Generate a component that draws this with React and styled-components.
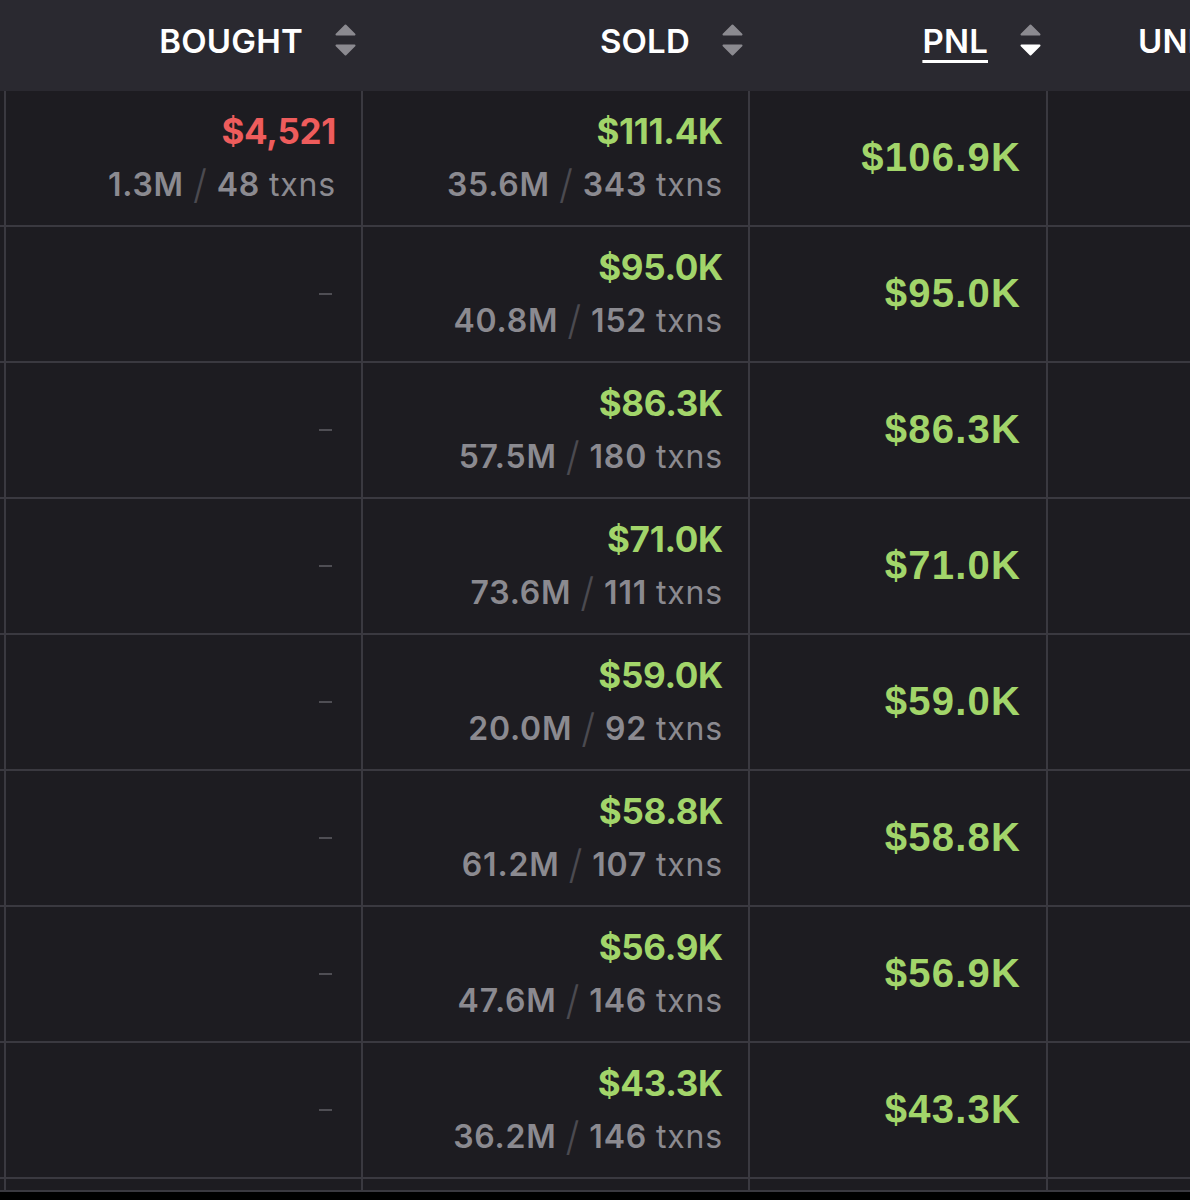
import React from 'react';
import styled, { createGlobalStyle } from 'styled-components';

const headBg = '#2a2930';
const rowBg = '#1d1c21';
const lineColor = '#3a3940';
const muted = '#8b8a90';
const green = '#a2d56a';
const red = '#ee5c5c';

const GlobalStyle = createGlobalStyle`
  html, body {
    margin: 0;
    padding: 0;
    background: #000;
  }
  body {
    font-family: Inter, "Noto Sans", sans-serif;
    overflow: hidden;
  }
  * {
    box-sizing: border-box;
  }
`;

const Table = styled.div`
  width: 1190px;
  overflow: hidden;
`;

const Row = styled.div`
  display: grid;
  grid-template-columns: 4px 357px 387px 298px 1fr;
  height: ${props => props.h}px;
  background: ${props => props.head ? headBg : rowBg};
  border-bottom: ${props => props.head ? 'none' : `2px solid ${lineColor}`};
`;

const Cell = styled.div`
  display: flex;
  flex-direction: column;
  justify-content: center;
  align-items: flex-end;
  gap: 14px;
  padding-right: 25px;
  border-left: 2px solid ${lineColor};
  min-width: 0;
  overflow: hidden;
`;

const Edge = styled.div``;

const HeadCell = styled.div`
  display: flex;
  align-items: center;
  justify-content: ${props => props.left ? 'flex-start' : 'flex-end'};
  gap: 32px;
  padding: ${props => props.left ? '0 0 12px 90px' : '0 5px 12px 0'};
  border-left: 2px solid ${headBg};
  white-space: nowrap;
  overflow: hidden;
`;

const HeadLabel = styled.span`
  color: #fff;
  font-size: 33px;
  font-weight: 600;
  letter-spacing: 0.2px;
  padding-top: 2px;
  text-decoration: ${props => props.active ? 'underline' : 'none'};
  text-decoration-thickness: 3px;
  text-underline-offset: 7px;
`;

const Usd = styled.div`
  color: ${props => props.loss ? red : green};
  font-size: 35px;
  font-weight: 700;
  line-height: 40px;
  letter-spacing: -0.3px;
`;

const Volume = styled.div`
  display: flex;
  align-items: center;
  color: ${muted};
  font-size: 32px;
  line-height: 40px;
  font-weight: 600;
  letter-spacing: 0.8px;
  white-space: nowrap;
`;

const Slash = styled.span`
  color: #4b4a50;
  font-weight: 300;
  font-size: 40px;
  margin: 0 9px;
`;

const Txns = styled.span`
  font-weight: 400;
  margin-left: 9px;
`;

const Dash = styled.span`
  display: block;
  width: 13px;
  height: 2px;
  margin-right: 4px;
  background: #4f4e54;
`;

const Pnl = styled.div`
  color: ${green};
  font-family: "Liberation Sans", Arial, sans-serif;
  font-size: 40px;
  font-weight: 700;
  letter-spacing: 1.2px;
  margin-top: -2px;
`;

function SortIcon({ active }) {
  return (
    <svg width="21" height="32" viewBox="0 0 21 32">
      <polygon points="10.5,1.5 19.5,10.5 1.5,10.5" fill={muted} stroke={muted} strokeWidth="2" strokeLinejoin="round" />
      <polygon points="1.5,21.5 19.5,21.5 10.5,30.5" fill={active ? '#fff' : muted} stroke={active ? '#fff' : muted} strokeWidth="2" strokeLinejoin="round" />
    </svg>
  );
}

const rows = [
  { bought: { usd: '$4,521', amt: '1.3M', tx: '48' }, sold: { usd: '$111.4K', amt: '35.6M', tx: '343' }, pnl: '$106.9K' },
  { sold: { usd: '$95.0K', amt: '40.8M', tx: '152' }, pnl: '$95.0K' },
  { sold: { usd: '$86.3K', amt: '57.5M', tx: '180' }, pnl: '$86.3K' },
  { sold: { usd: '$71.0K', amt: '73.6M', tx: '111' }, pnl: '$71.0K' },
  { sold: { usd: '$59.0K', amt: '20.0M', tx: '92' }, pnl: '$59.0K' },
  { sold: { usd: '$58.8K', amt: '61.2M', tx: '107' }, pnl: '$58.8K' },
  { sold: { usd: '$56.9K', amt: '47.6M', tx: '146' }, pnl: '$56.9K' },
  { sold: { usd: '$43.3K', amt: '36.2M', tx: '146' }, pnl: '$43.3K' },
];

function Trade({ data, loss }) {
  if (!data) return <Dash />;
  return (
    <>
      <Usd loss={loss}>{data.usd}</Usd>
      <Volume>
        {data.amt}
        <Slash>/</Slash>
        {data.tx}
        <Txns>txns</Txns>
      </Volume>
    </>
  );
}

export default function App() {
  return (
    <Table>
      <GlobalStyle />
      <Row head h={91}>
        <Edge />
        <HeadCell>
          <HeadLabel>BOUGHT</HeadLabel>
          <SortIcon />
        </HeadCell>
        <HeadCell>
          <HeadLabel>SOLD</HeadLabel>
          <SortIcon />
        </HeadCell>
        <HeadCell>
          <HeadLabel active>PNL</HeadLabel>
          <SortIcon active />
        </HeadCell>
        <HeadCell left>
          <HeadLabel>UNREALIZED</HeadLabel>
        </HeadCell>
      </Row>
      {rows.map((r, i) => (
        <Row key={i} h={136}>
          <Edge />
          <Cell>
            <Trade data={r.bought} loss />
          </Cell>
          <Cell>
            <Trade data={r.sold} />
          </Cell>
          <Cell>
            <Pnl>{r.pnl}</Pnl>
          </Cell>
          <Cell />
        </Row>
      ))}
      <Row h={13}>
        <Edge />
        <Cell />
        <Cell />
        <Cell />
        <Cell />
      </Row>
    </Table>
  );
}
